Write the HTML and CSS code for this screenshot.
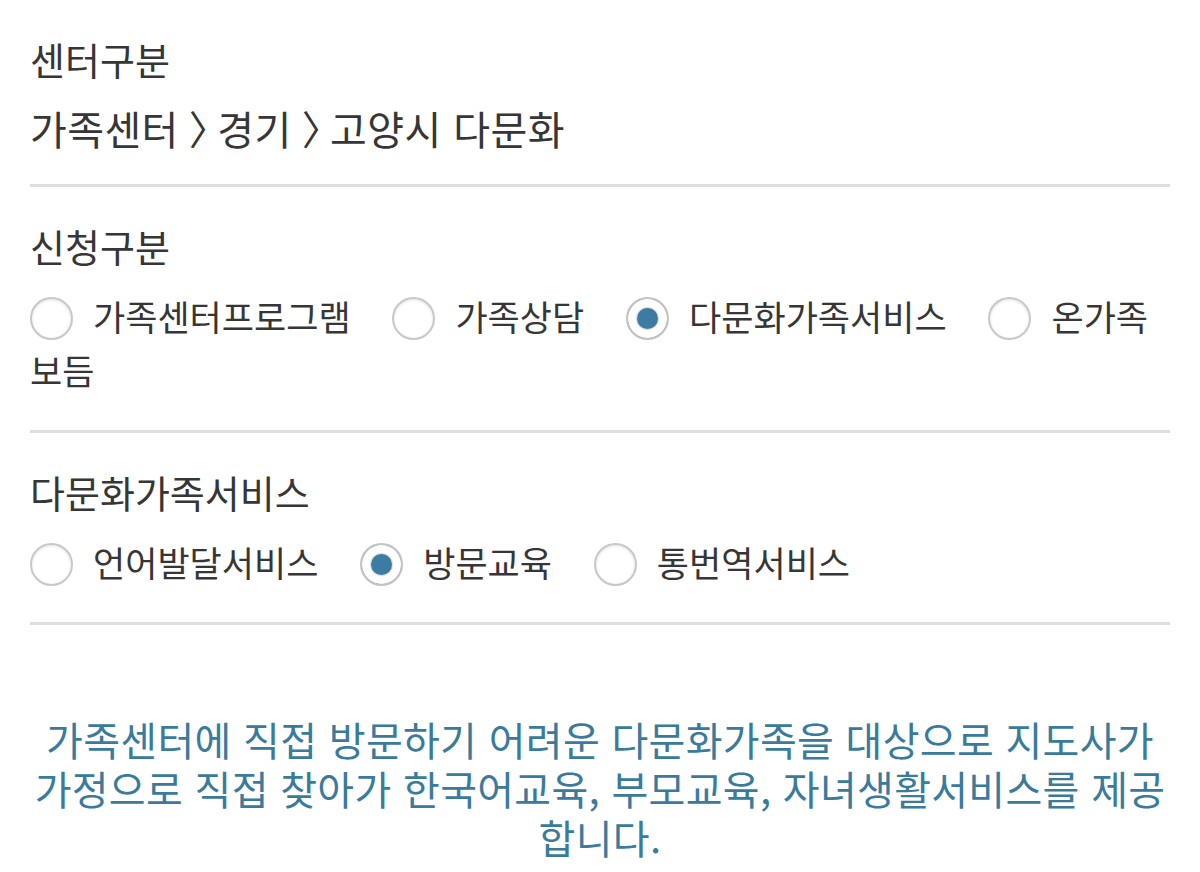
FILE: index.html
```html
<!DOCTYPE html>
<html lang="ko">
<head>
  <meta charset="UTF-8">
  <meta name="viewport" content="width=device-width, initial-scale=1.0">
  <title>신청구분</title>
  <link rel="stylesheet" href="styles.css">
</head>
<body>

  <!-- 센터구분 -->
  <div class="field">
    <div class="field-label">센터구분</div>
    <div class="crumbs">가족센터<span class="sep">〉</span>경기<span class="sep">〉</span>고양시 다문화</div>
  </div>

  <!-- 신청구분 -->
  <div class="field">
    <div class="field-label">신청구분</div>
    <div class="radios">
      <label class="radio"><span class="dot"></span>가족센터프로그램</label>
      <label class="radio"><span class="dot"></span>가족상담</label>
      <label class="radio checked"><span class="dot"></span>다문화가족서비스</label>
      <label class="radio"><span class="dot"></span>온가족 보듬</label>
    </div>
  </div>

  <!-- 다문화가족서비스 -->
  <div class="field">
    <div class="field-label">다문화가족서비스</div>
    <div class="radios">
      <label class="radio"><span class="dot"></span>언어발달서비스</label>
      <label class="radio checked"><span class="dot"></span>방문교육</label>
      <label class="radio"><span class="dot"></span>통번역서비스</label>
    </div>
  </div>

  <p class="notice">가족센터에 직접 방문하기 어려운 다문화가족을 대상으로 지도사가 가정으로 직접 찾아가 한국어교육, 부모교육, 자녀생활서비스를 제공합니다.</p>

</body>
</html>
```

FILE: styles.css
```css
* {
  margin: 0;
  padding: 0;
  box-sizing: border-box;
}

html, body {
  background: #fff;
}

body {
  padding: 0 30px;
  font-family: "Noto Sans CJK KR", "Noto Sans", sans-serif;
  color: #363636;
}

.field {
  padding: 34px 0 30px;
  border-bottom: 3px solid #dedede;
}

.field-label {
  font-size: 38px;
  line-height: 50px;
  margin-bottom: 18px;
}

.crumbs {
  font-size: 40px;
  line-height: 52px;
  letter-spacing: 0.4px;
}

.sep {
  display: inline-block;
  margin: 0 -12px 0 10px;
}

.radios {
  font-size: 35px;
  line-height: 54px;
  padding-bottom: 3px;
  word-break: keep-all;
}

.radio {
  margin-right: 32px;
}

.radio:last-child {
  margin-right: 0;
}

.dot {
  display: inline-block;
  width: 43px;
  height: 43px;
  margin-right: 20px;
  vertical-align: -9px;
  border-radius: 50%;
  border: 2px solid #c8c8c8;
  background: #fff;
  box-shadow: inset 0 1px 3px rgba(0, 0, 0, 0.12);
}

.checked .dot {
  background: #3c7ca3;
  border-color: #c4c4c4;
  box-shadow: inset 0 0 0 8px #fff, inset 0 0 0 9px #ddd;
}

.notice {
  margin-top: 90px;
  font-size: 40px;
  line-height: 49px;
  letter-spacing: 0.3px;
  text-align: center;
  color: #3a7b9c;
}
```
